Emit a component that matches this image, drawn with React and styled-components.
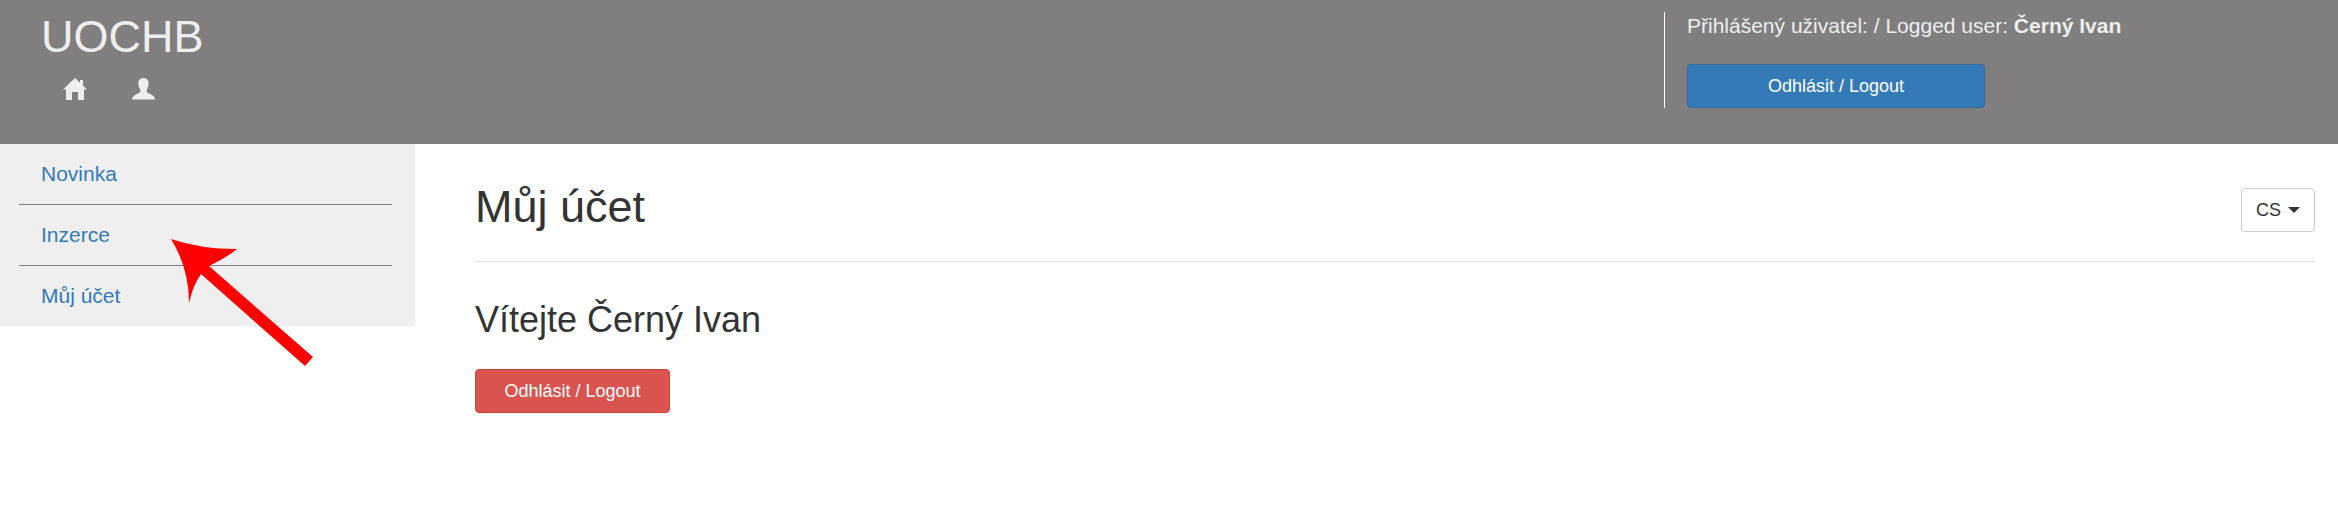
import React from 'react';
import styled, { createGlobalStyle } from 'styled-components';

const GlobalStyle = createGlobalStyle`
  html, body {
    margin: 0;
    padding: 0;
    background: #fff;
    font-family: "Liberation Sans", Arial, sans-serif;
    color: #333;
  }
`;

const Page = styled.div`
  position: relative;
  width: 2338px;
  height: 506px;
  overflow: hidden;
`;

const Header = styled.header`
  height: 144px;
  background: #807e7f;
  color: #eee;
  display: flex;
  justify-content: space-between;
  box-sizing: border-box;
  padding: 12px 0 0 41px;
`;

const Brand = styled.div`
  display: flex;
  flex-direction: column;
`;

const Logo = styled.div`
  font-size: 45px;
  line-height: 50px;
`;

const IconRow = styled.div`
  display: flex;
  gap: 45px;
  margin: 16px 0 0 22px;
`;

const UserBox = styled.div`
  width: 674px;
  height: 96px;
  box-sizing: border-box;
  border-left: 1px solid #fff;
  padding-left: 22px;
`;

const UserText = styled.div`
  font-size: 21px;
  line-height: 28px;
  margin-bottom: 24px;
  b {
    font-weight: 700;
  }
`;

const Button = styled.button`
  display: block;
  box-sizing: border-box;
  height: 44px;
  width: ${(p) => p.$width}px;
  padding: 0;
  border: 1px solid ${(p) => p.$border};
  border-radius: 4px;
  background: ${(p) => p.$bg};
  color: #fff;
  font-family: inherit;
  font-size: 18px;
`;

const Body = styled.div`
  display: flex;
  align-items: flex-start;
`;

const Sidebar = styled.nav`
  width: 415px;
  height: 182px;
  flex: none;
  background: #efefef;
  box-sizing: border-box;
  padding: 0 23px 0 19px;
`;

const NavItem = styled.a`
  display: block;
  height: 61px;
  box-sizing: border-box;
  padding: 17px 0 0 22px;
  font-size: 21px;
  line-height: 26px;
  color: #337ab7;
  border-bottom: ${(p) => (p.$last ? 'none' : '1px solid #808080')};
`;

const Main = styled.main`
  flex: 1;
  padding: 0 23px 0 60px;
`;

const TitleRow = styled.div`
  display: flex;
  justify-content: space-between;
  height: 118px;
  box-sizing: border-box;
  border-bottom: 1px solid #e2e2e2;
`;

const Title = styled.h1`
  margin: 38px 0 0;
  font-size: 45px;
  line-height: 50px;
  font-weight: 400;
`;

const LangButton = styled.button`
  align-self: flex-start;
  margin-top: 44px;
  width: 74px;
  height: 44px;
  display: flex;
  align-items: center;
  justify-content: center;
  gap: 7px;
  padding: 0;
  background: #fff;
  border: 1px solid #ccc;
  border-radius: 4px;
  color: #333;
  font-family: inherit;
  font-size: 18px;
`;

const Caret = styled.span`
  width: 0;
  height: 0;
  border-top: 6px solid #333;
  border-left: 6px solid transparent;
  border-right: 6px solid transparent;
`;

const Welcome = styled.h3`
  margin: 37px 0 28px;
  font-size: 36px;
  line-height: 42px;
  font-weight: 400;
`;

const Arrow = styled.svg`
  position: absolute;
  left: 165px;
  top: 235px;
`;

const HomeIcon = () => (
  <svg width="24" height="22" viewBox="0 0 24 22">
    <path
      fill="#eee"
      d="M12 0 L17 4.8 L17 2 L20 2 L20 7.6 L24 11.5 L21 11.5 L21 22 L15 22 L15 14 L9 14 L9 22 L3 22 L3 11.5 L0 11.5 Z"
    />
  </svg>
);

const UserIcon = () => (
  <svg width="23" height="22" viewBox="0 0 23 22">
    <path
      fill="#eee"
      d="M11.5 0 C15.5 0 17 3 16.6 6.5 C16.3 9.5 14.8 11.5 14.5 13 C14.5 14.5 17 15.5 19.5 16.8 C21.5 17.8 23 19.5 23 21.5 L0 21.5 C0 19.5 1.5 17.8 3.5 16.8 C6 15.5 8.5 14.5 8.5 13 C8.2 11.5 6.7 9.5 6.4 6.5 C6 3 7.5 0 11.5 0 Z"
    />
  </svg>
);

export default function App() {
  return (
    <Page>
      <GlobalStyle />
      <Header>
        <Brand>
          <Logo>UOCHB</Logo>
          <IconRow>
            <HomeIcon />
            <UserIcon />
          </IconRow>
        </Brand>
        <UserBox>
          <UserText>
            Přihlášený uživatel: / Logged user: <b>Černý Ivan</b>
          </UserText>
          <Button $width={298} $bg="#337ab7" $border="#2e6da4">
            Odhlásit / Logout
          </Button>
        </UserBox>
      </Header>
      <Body>
        <Sidebar>
          <NavItem>Novinka</NavItem>
          <NavItem>Inzerce</NavItem>
          <NavItem $last>Můj účet</NavItem>
        </Sidebar>
        <Main>
          <TitleRow>
            <Title>Můj účet</Title>
            <LangButton>
              CS <Caret />
            </LangButton>
          </TitleRow>
          <Welcome>Vítejte Černý Ivan</Welcome>
          <Button $width={195} $bg="#d9534f" $border="#d43f3a">
            Odhlásit / Logout
          </Button>
        </Main>
      </Body>
      <Arrow width="160" height="140" viewBox="165 235 160 140">
        <path
          fill="#fe0000"
          d="M171 239 Q200 249 237 249 Q226 258 209 266 L313 357 L305 366 L201 274 Q193 285 189 303 Q189 268 171 239 Z"
        />
      </Arrow>
    </Page>
  );
}
